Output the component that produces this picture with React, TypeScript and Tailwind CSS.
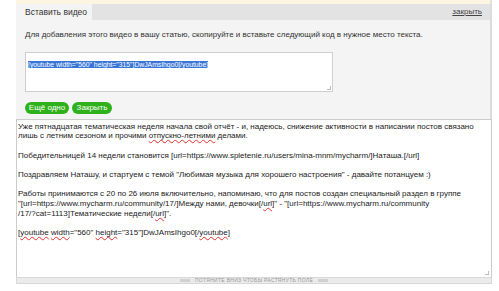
import React from "react";

const ff = { fontFamily: '"Liberation Sans", Arial, sans-serif' };

function Squiggle({ children }: { children: React.ReactNode }) {
  return (
    <span className="underline decoration-wavy decoration-[#e03030] decoration-[1px] underline-offset-[1px]">
      {children}
    </span>
  );
}

export default function App() {
  return (
    <div className="w-[499px] h-[291px] bg-white overflow-hidden" style={ff}>
      <div className="ml-[16px] w-[476px] flex flex-col">
        <div className="h-[4px] bg-[#fcf5e2] border-r-2 border-[#e2e2e2]" />
        <div className="h-[16px] bg-[#e3e3e3] flex items-stretch justify-between border-r-2 border-[#dcdcdc]">
          <div className="w-[76px] bg-[#f4f4f4] text-[8.5px] text-[#333] pl-[9px] flex items-center whitespace-nowrap">
            Вставить видео
          </div>
          <div className="text-[8px] text-[#444] underline pr-[8px] flex items-center">закрыть</div>
        </div>
        <div className="h-[99px] bg-[#f4f4f4] border-r-2 border-[#dcdcdc] pl-[9px] pt-[10px]">
          <div className="text-[8px] text-[#333] leading-[10px] whitespace-nowrap">
            Для добавления этого видео в вашу статью, скопируйте и вставьте следующий код в нужное место текста.
          </div>
          <div className="mt-[12px] w-[308px] h-[40px] bg-white border border-[#cfcfcf] relative px-[2px] pt-[4px] leading-[9px]">
            <span className="bg-[#3875d7] text-white text-[6.8px] leading-[9px] whitespace-nowrap">
              [youtube width="560" height="315"]DwJAmsIhgo0[/youtube]
            </span>
            <div className="absolute right-[1px] bottom-[1px] w-[4px] h-[4px] border-r border-b border-[#bbb]" />
          </div>
          <div className="mt-[9.5px] flex gap-[3px]">
            <div className="h-[12px] w-[44px] justify-center rounded-full bg-[#2eb11b] text-white text-[8px] flex items-center">
              Ещё одно
            </div>
            <div className="h-[12px] w-[40px] justify-center rounded-full bg-[#2eb11b] text-white text-[8px] flex items-center">
              Закрыть
            </div>
          </div>
        </div>
        <div className="h-[158px] border-l border-t border-r border-[#cccccc] bg-white text-[8px] leading-[9.7px] text-[#222] pl-[1px] pt-[1.5px] relative">
          <p>
            Уже пятнадцатая тематическая неделя начала свой отчёт - и, надеюсь, снижение активности в написании постов связано
            лишь с летним сезоном и прочими <Squiggle>отпускно-летними</Squiggle> делами.
          </p>
          <p className="mt-[9.7px]">
            Победительницей 14 недели становится [url=https://www.spletenie.ru/users/mina-mnm/mycharm/]Наташа.[/url]
          </p>
          <p className="mt-[9.7px]">
            Поздравляем Наташу, и стартуем с темой "Любимая музыка для хорошего настроения" - давайте потанцуем :)
          </p>
          <p className="mt-[9.7px]">
            Работы принимаются с 20 по 26 июля включительно, напоминаю, что для постов создан специальный раздел в группе
            <br />
            "[url=https://www.mycharm.ru/community/17/]Между нами, девочки[/<Squiggle>url</Squiggle>]" - "[url=https://www.mycharm.ru/community
            <br />
            /17/?cat=1113]Тематические недели[/<Squiggle>url</Squiggle>]".
          </p>
          <p className="mt-[9.7px]">
            [<Squiggle>youtube</Squiggle> <Squiggle>width</Squiggle>="560" <Squiggle>height</Squiggle>="315"]DwJAmsIhgo0[/<Squiggle>youtube</Squiggle>]
          </p>
          <div className="absolute right-[2px] bottom-[2px] w-[4px] h-[4px] border-r border-b border-[#bbb]" />
        </div>
        <div className="h-[7px] bg-[#ebebeb] border border-[#d8d8d8] flex items-center justify-center gap-[5px]">
          <div className="w-[10px] h-[3px] bg-[#d0d0d0]" />
          <span className="text-[5px] leading-[5px] text-[#999] tracking-[0.3px] uppercase whitespace-nowrap">потяните вниз чтобы растянуть поле</span>
          <div className="w-[10px] h-[3px] bg-[#d0d0d0]" />
        </div>
      </div>
    </div>
  );
}
